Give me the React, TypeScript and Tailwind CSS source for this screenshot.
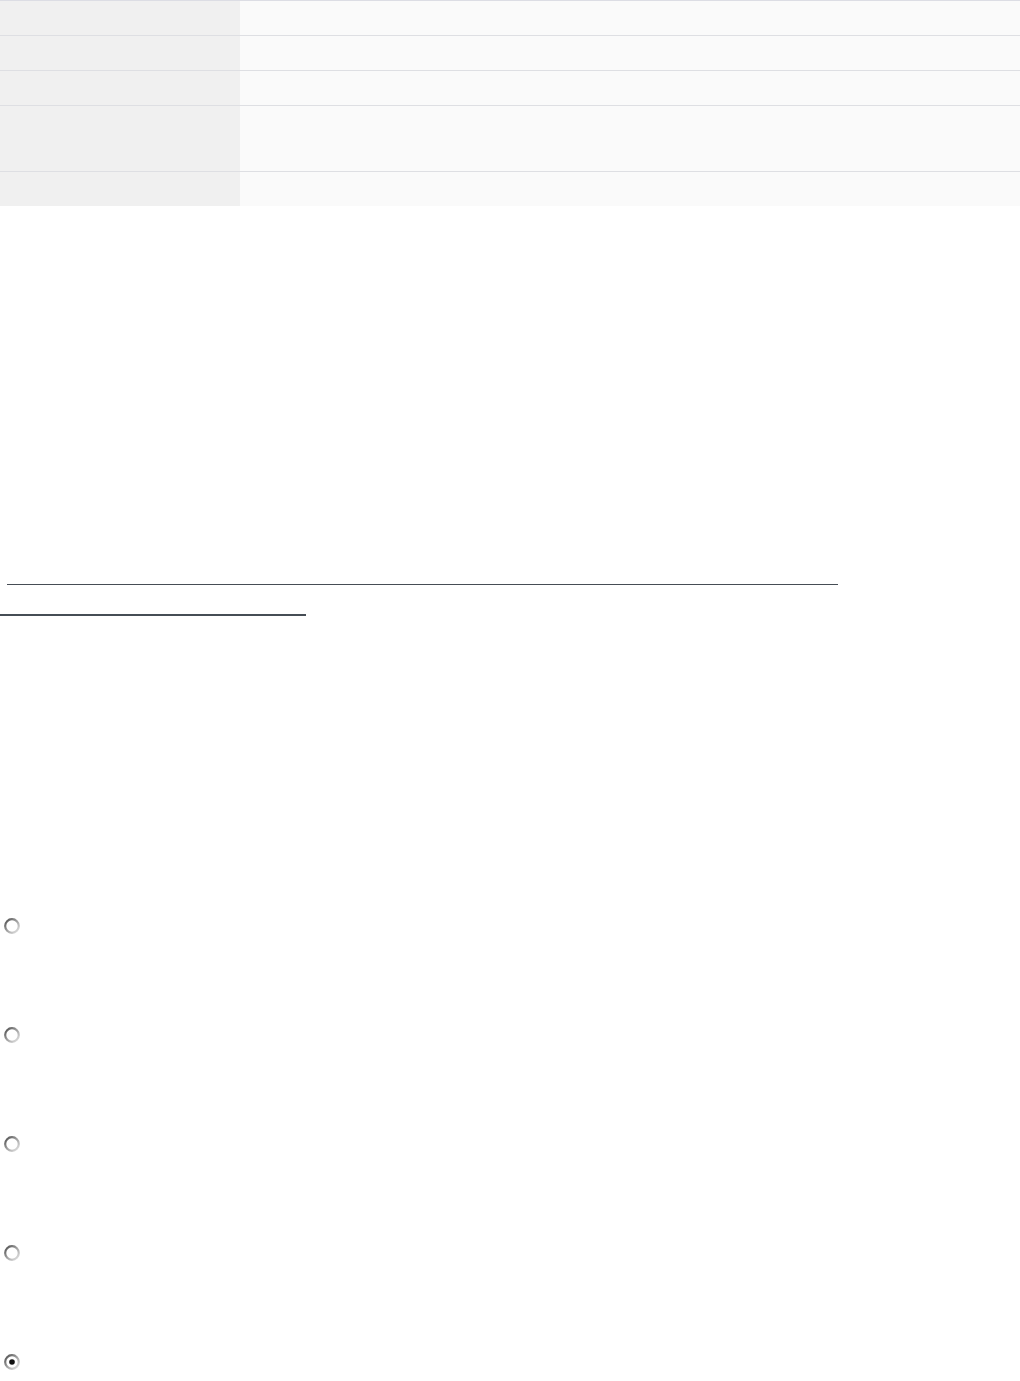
import React from 'react';

const rows = [35, 35, 35, 66, 35];

const Radio = ({ checked = false }: { checked?: boolean }) => (
  <svg width="16" height="16" viewBox="0 0 16 16" className="block">
    <defs>
      <linearGradient id={checked ? 'rg-c' : 'rg'} x1="0" y1="0" x2="1" y2="1">
        <stop offset="0" stopColor="#4a4a4a" />
        <stop offset="0.45" stopColor="#9a9a9a" />
        <stop offset="1" stopColor="#e8e8e8" />
      </linearGradient>
    </defs>
    <circle cx="8" cy="8" r="6.8" fill="#fff" stroke={`url(#${checked ? 'rg-c' : 'rg'})`} strokeWidth="2.2" />
    {checked && <circle cx="8" cy="8" r="2.8" fill="#111" />}
  </svg>
);

export default function App() {
  return (
    <div className="w-[1020px] h-[1381px] bg-white overflow-hidden font-['Liberation_Sans',sans-serif]">
      <div className="border-t border-[#dcdde4]">
        {rows.map((h, i) => (
          <div
            key={i}
            className={`flex ${i < rows.length - 1 ? 'border-b border-[#dedfe3]' : ''}`}
            style={{ height: i < rows.length - 1 ? h : h - 1 }}
          >
            <div className="w-[240px] bg-[#f0f0f0]" />
            <div className="flex-1 bg-[#fafafa]" />
          </div>
        ))}
      </div>

      <div className="mt-[378px] ml-[7px] w-[831px] h-px bg-[#464d55]" />
      <div className="mt-[29px] w-[306px] h-[2px] bg-[#464d55]" />

      <div className="mt-[302px] pl-[4px]">
        {[false, false, false, false, true].map((c, i) => (
          <div key={i} className="h-[109px]">
            <Radio checked={c} />
          </div>
        ))}
      </div>
    </div>
  );
}
